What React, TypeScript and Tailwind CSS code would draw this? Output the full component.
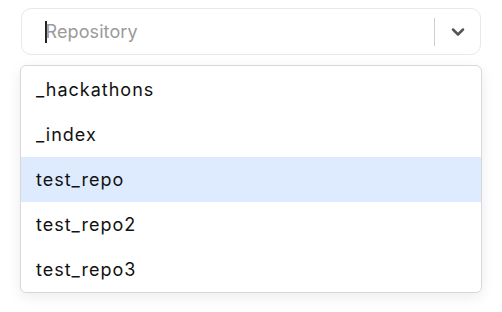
import { ChevronDown } from 'lucide-react';

const repos = ['_hackathons', '_index', 'test_repo', 'test_repo2', 'test_repo3'];

export default function App() {
  return (
    <div
      className="h-[312px] w-[502px] bg-white pt-[8px] pl-[21px]"
      style={{ fontFamily: 'Inter, "Open Sans", sans-serif' }}
    >
      <div className="flex h-[47px] w-[460px] items-center rounded-[10px] border border-[#e8e8ec] bg-white">
        <div className="flex flex-1 items-center pl-[23px]">
          <span className="mr-[-1px] h-[22px] w-[1.5px] bg-[#222]" />
          <span className="text-[18px] tracking-[0.1px] text-[#9a9a9a]">Repository</span>
        </div>
        <span className="h-[28px] w-px bg-[#cfcfcf]" />
        <div className="flex w-[45px] items-center justify-center">
          <ChevronDown size={20} strokeWidth={3} className="text-[#555]" />
        </div>
      </div>
      <div className="mt-[10px] ml-[-1px] w-[462px] overflow-hidden rounded-[6px] border border-[#d8d8d8] bg-white pt-[1px] shadow-[0_4px_14px_rgba(0,0,0,0.08)]">
        {repos.map((r) => (
          <div
            key={r}
            className={`flex h-[45px] items-center pl-[15px] text-[18px] tracking-[1px] text-[#111] ${r === 'test_repo' ? 'bg-[#deebff]' : ''}`}
          >
            {r}
          </div>
        ))}
      </div>
    </div>
  );
}
